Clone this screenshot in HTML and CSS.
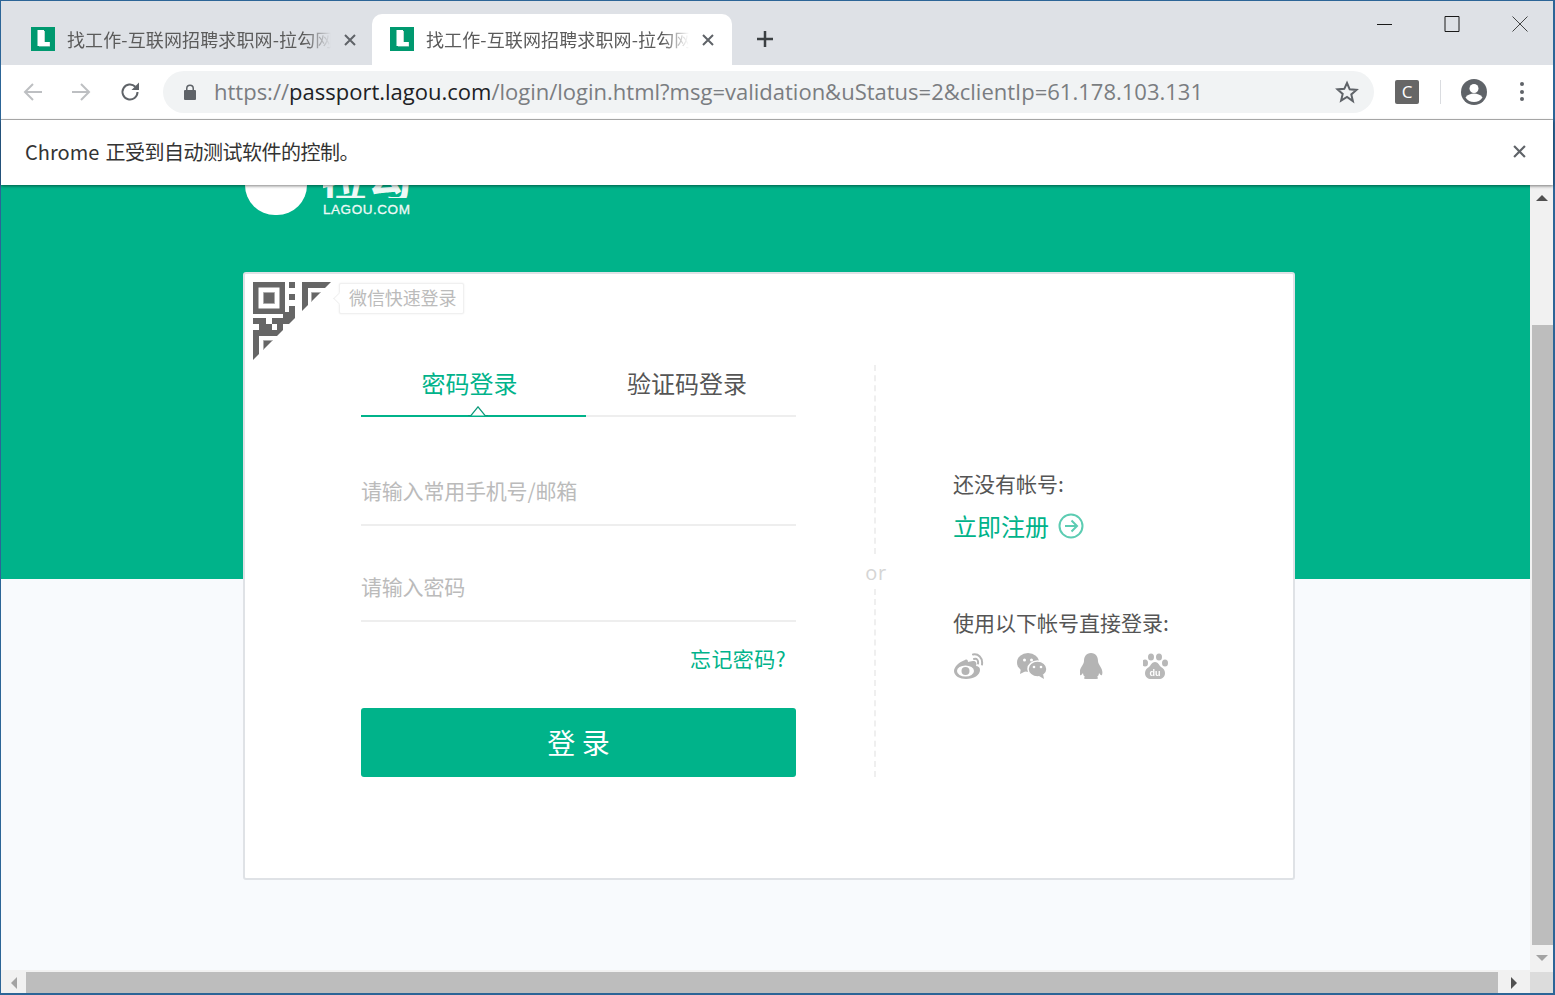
FILE: index.html
```html
<!DOCTYPE html>
<html lang="zh-CN">
<head>
<meta charset="utf-8">
<title>拉勾网</title>
<link rel="stylesheet" href="styles.css">
</head>
<body>
<div class="window">
  <div class="tabstrip">
    <div class="tab">
      <svg class="favicon" viewBox="0 0 24 24"><rect width="24" height="24" fill="#00996f"/><path d="M8 4h6v11h5v4.500H8z" fill="#c5d9d1"/><path d="M6.500 3H13v12h5.500v4h-12z" fill="#fff"/></svg>
      <span class="tab-title">找工作-互联网招聘求职网-拉勾网</span>
      <svg class="tab-x" viewBox="0 0 12 12"><path d="M1 1l10 10M11 1L1 11"/></svg>
    </div>
    <div class="tab active">
      <svg class="favicon" viewBox="0 0 24 24"><rect width="24" height="24" fill="#00996f"/><path d="M8 4h6v11h5v4.500H8z" fill="#c5d9d1"/><path d="M6.500 3H13v12h5.500v4h-12z" fill="#fff"/></svg>
      <span class="tab-title">找工作-互联网招聘求职网-拉勾网</span>
      <svg class="tab-x" viewBox="0 0 12 12"><path d="M1 1l10 10M11 1L1 11"/></svg>
    </div>
    <svg class="newtab" viewBox="0 0 18 18"><path d="M9 1v16M1 9h16"/></svg>
    <div class="winctl">
      <svg viewBox="0 0 16 16"><path d="M0 8.500h15"/></svg>
      <svg viewBox="0 0 16 16"><path d="M1 .5h14v15H1z"/></svg>
      <svg viewBox="0 0 16 16"><path d="M.5.5l15 15M15.500.5l-15 15"/></svg>
    </div>
  </div>
  <div class="toolbar">
    <svg class="nav dim" viewBox="0 0 24 24"><path d="M21 12H4M12 4l-8 8 8 8"/></svg>
    <svg class="nav dim fwd" viewBox="0 0 24 24"><path d="M3 12h17M12 4l8 8-8 8"/></svg>
    <svg class="nav reload" viewBox="0 0 24 24"><path d="M19.500 12a7.500 7.500 0 1 1-2.200-5.300"/><path class="fill" d="M13.500 10H21V2.500z"/></svg>
    <div class="omnibox">
      <svg class="lock" viewBox="0 0 12 16"><path d="M2 6V4.500a4 4 0 0 1 8 0V6h1a1 1 0 0 1 1 1v8a1 1 0 0 1-1 1H1a1 1 0 0 1-1-1V7a1 1 0 0 1 1-1zm1.500 0h5V4.500a2.500 2.500 0 0 0-5 0z"/></svg>
      <span class="url"><span class="dim-url">https://</span>passport.lagou.com<span class="dim-url">/login/login.html?msg=validation&amp;uStatus=2&amp;clientIp=61.178.103.131</span></span>
      <svg class="star" viewBox="0 0 24 24"><path d="M12 3l2.700 6.300 6.800.6-5.200 4.500 1.600 6.700L12 17l-5.900 3.600 1.600-6.700-5.200-4.500 6.800-.6z"/></svg>
    </div>
    <div class="ext">C</div>
    <div class="sep"></div>
    <svg class="avatar" viewBox="0 0 26 26"><circle cx="13" cy="13" r="13" fill="#5f6368"/><circle cx="13" cy="9.500" r="4.500" fill="#fff"/><path d="M4.500 18.500c2-3 5.500-4 8.500-4s6.500 1 8.500 4c-2 3-5 4.500-8.500 4.500s-6.500-1.500-8.500-4.500z" fill="#fff"/></svg>
    <div class="dots"><i></i><i></i><i></i></div>
  </div>
  <div class="infobar">
    <span class="info-text"><span class="brand">Chrome</span> 正受到自动测试软件的控制。</span>
    <svg class="info-x" viewBox="0 0 12 12"><path d="M1 1l10 10M11 1L1 11"/></svg>
  </div>
  <div class="viewport">
    <div class="viewrow">
      <main class="page">
        <header class="page-head">
          <div class="logo-disc"></div>
          <div class="logo-words">
            <div class="logo-cn"><span>拉勾</span></div>
            <div class="logo-en">LAGOU.COM</div>
          </div>
        </header>
        <section class="card">
          <div class="qr-wrap">
            <svg class="qr" viewBox="0 0 78 78">
              <defs><clipPath id="qrcut"><path d="M0 0h78L0 78z"/></clipPath></defs>
              <g clip-path="url(#qrcut)">
                <path fill="#666" fill-rule="evenodd" d="M0 0h32v32H0zM5.500 5.500v21h21v-21z"/>
                <path fill="#666" stroke="#ababab" d="M10.500 10.500h11v11h-11z"/>
                <path fill="#666" d="M36 0h6v6h-6zM36 12h6v6h-6zM36 24h6v18h-6zM30 30h6v6h-6z"/>
                <path fill="#666" d="M49 0h29v6H55v30h-6z"/>
                <path fill="#666" stroke="#ababab" d="M58.500 10.500h11v11h-11z"/>
                <path fill="#666" d="M0 36h13v6H0zM19 36h17v6H19zM6 42h13v6H6zM24 42h6v6h-6z"/>
                <path fill="#666" d="M0 48h40v6H6v24H0z"/>
                <path fill="#666" stroke="#ababab" d="M10.500 58.500h11v11h-11z"/>
              </g>
            </svg>
            <div class="qr-tip">微信快速登录</div>
          </div>
          <div class="card-body">
            <form class="login">
              <div class="tabs">
                <div class="form-tab on">密码登录</div>
                <div class="form-tab">验证码登录</div>
                <svg class="caret" viewBox="0 0 20 10"><path d="M0 9.500h3L10 .8l7 8.700h3"/></svg>
              </div>
              <div class="field first">请输入常用手机号/邮箱</div>
              <div class="field">请输入密码</div>
              <div class="forgot">忘记密码?</div>
              <div class="submit">登 录</div>
            </form>
            <div class="divider">
              <div class="dash"></div>
              <div class="or">or</div>
              <div class="dash"></div>
            </div>
            <aside class="side">
              <div class="side-label">还没有帐号:</div>
              <div class="reg"><span>立即注册</span>
                <svg class="reg-arrow" viewBox="0 0 26 26"><circle cx="13" cy="13" r="11.500"/><path d="M7 13h12M13.500 7.500L19 13l-5.500 5.500"/></svg>
              </div>
              <div class="side-label third">使用以下帐号直接登录:</div>
              <div class="socials">
                <svg viewBox="0 0 30 26"><path d="M11 7C5 9 0 14 0 18c0 5 6 8 12 8 8 0 14-4 14-9 0-3-2-4-4-4 1-3 0-5-3-5-2 0-4 1-5 1 0-2-1-3-3-2z" fill="#b4b4b4"/><ellipse cx="11.500" cy="18" rx="8.500" ry="5.500" fill="#fff"/><circle cx="11.500" cy="18" r="4" fill="#b4b4b4"/><path d="M19 1.500c5-1 10 3 9 10M20 6c3-1 4.500 1.500 4 4.500" fill="none" stroke="#b4b4b4" stroke-width="2" stroke-linecap="round"/></svg>
                <svg viewBox="0 0 30 26"><ellipse cx="11" cy="9.500" rx="11" ry="9.500" fill="#b4b4b4"/><path d="M4 15l-1 6 6-3z" fill="#b4b4b4"/><ellipse cx="20.500" cy="16" rx="9.500" ry="8" fill="#b4b4b4" stroke="#fff" stroke-width="1.500"/><path d="M26 21l1 5-5-3z" fill="#b4b4b4"/><circle cx="7.500" cy="7" r="1.500" fill="#fff"/><circle cx="14.500" cy="7" r="1.500" fill="#fff"/><circle cx="17" cy="14" r="1.300" fill="#fff"/><circle cx="24" cy="14" r="1.300" fill="#fff"/></svg>
                <svg viewBox="0 0 30 26"><path transform="translate(-4 0)" d="M15 0c5 0 7 4 7 8 0 2 1 3 2 5 2 3 3 6 2 9-1 1-2-1-3-2 0 2-1 3-2 4 2 1 1 2-2 2h-8c-3 0-4-1-2-2-1-1-2-2-2-4-1 1-2 3-3 2-1-3 0-6 2-9 1-2 2-3 2-5 0-4 2-8 7-8z" fill="#b4b4b4"/></svg>
                <svg viewBox="0 0 30 26"><g transform="translate(-3 0)"><g fill="#b8b8b8"><ellipse cx="5" cy="10" rx="3" ry="3.500"/><ellipse cx="11" cy="4" rx="3" ry="3.500"/><ellipse cx="19" cy="4" rx="3" ry="3.500"/><ellipse cx="25" cy="10" rx="3" ry="3.500"/><path d="M15 9c3 0 4 3 6 5 2 1 4 3 4 6 0 4-3 6-6 6h-8c-3 0-6-2-6-6 0-3 2-5 4-6 2-2 3-5 6-5z"/></g><text x="15" y="23" class="du">du</text></g></svg>
              </div>
            </aside>
          </div>
        </section>
      </main>
      <div class="vscroll">
        <div class="sb-btn"><svg viewBox="0 0 12 6"><path d="M0 6L6 0l6 6z" fill="#505050"/></svg></div>
        <div class="vtrack"><div class="vthumb"></div></div>
        <div class="sb-btn"><svg viewBox="0 0 12 6"><path d="M0 0h12L6 6z" fill="#a3a3a3"/></svg></div>
      </div>
    </div>
    <div class="hscroll">
      <div class="hbtn"><svg viewBox="0 0 6 12"><path d="M6 0v12L0 6z" fill="#a3a3a3"/></svg></div>
      <div class="hthumb"></div>
      <div class="hbtn right"><svg viewBox="0 0 6 12"><path d="M0 0v12l6-6z" fill="#505050"/></svg></div>
      <div class="corner"></div>
    </div>
  </div>
</div>
</body>
</html>
```

FILE: styles.css
```css
* { box-sizing: border-box; }
html, body { margin: 0; height: 100%; overflow: hidden; }
body { font-family: "Noto Sans CJK SC", "Noto Sans", sans-serif; }
.window { width: 1555px; height: 995px; border: 1px solid #2c6597; border-width: 1px 2px 2px 1px; display: flex; flex-direction: column; background: #fff; }

.tabstrip { height: 64px; flex: none; background: #dee1e6; display: flex; align-items: flex-end; padding-left: 13px; position: relative; }
.tab { width: 360px; height: 51px; padding: 0 16px 0 17px; display: flex; align-items: center; color: #5b5b5b; font-size: 18px; letter-spacing: .12px; margin-right: -1px; }
.tab.active { background: #fff; border-radius: 10px 10px 0 0; margin-left: -1px; padding-left: 18px; }
.favicon { width: 24px; height: 24px; flex: none; margin-right: 12px; margin-top: -1px; }
.tab-title { flex: 1; min-width: 0; white-space: nowrap; overflow: hidden; padding-bottom: 1px; -webkit-mask-image: linear-gradient(90deg, #000 90%, transparent); mask-image: linear-gradient(90deg, #000 90%, transparent); }
.tab-x { width: 12px; height: 12px; flex: none; margin-left: 13px; margin-right: 2px; fill: none; stroke: #5f6368; stroke-width: 2; }
.newtab { width: 18px; height: 18px; margin: 0 0 17px 25px; fill: none; stroke: #3c4043; stroke-width: 2.500; }
.winctl { position: absolute; right: 0; top: 0; display: flex; }
.winctl svg { width: 16px; height: 16px; margin: 15px 26px 0 26px; fill: none; stroke: #1a1a1a; stroke-width: 1; }
.winctl svg:first-child { margin-right: 25px; }
.winctl svg:last-child { margin: 15px 25px 0 26px; stroke-width: .8; }

.toolbar { height: 55px; flex: none; border-bottom: 1px solid #b5b5b5; display: flex; align-items: center; padding: 0 0 1px 20px; }
.nav { width: 24px; height: 24px; flex: none; fill: none; stroke-width: 2; margin-right: 24px; }
.nav.dim { stroke: #bdbfc2; }
.nav.fwd { margin-right: 25px; }
.nav.reload { stroke: #5f6368; margin-right: 21px; }
.nav .fill { fill: #5f6368; stroke: none; }
.omnibox { width: 1211px; height: 42px; background: #f1f3f4; border-radius: 21px; display: flex; align-items: center; padding: 0 15px 0 21px; flex: none; }
.lock { width: 12px; height: 16px; fill: #5f6368; flex: none; margin-right: 18px; }
.url { flex: 1; font-family: "Open Sans", "Noto Sans", sans-serif; font-size: 22px; letter-spacing: 0; line-height: 30px; padding-bottom: 2px; color: #202124; white-space: nowrap; }
.dim-url { color: #7a7d81; }
.star { width: 24px; height: 24px; fill: none; stroke: #5f6368; stroke-width: 2; flex: none; }
.ext { width: 24px; height: 24px; margin-left: 21px; background: #666; border-radius: 2px; color: #fff; font: 17px/24px "Open Sans", sans-serif; text-align: center; flex: none; }
.sep { width: 1px; height: 24px; background: #dadce0; margin: 0 20px 0 21px; flex: none; }
.avatar { width: 26px; height: 26px; flex: none; }
.dots { display: flex; flex-direction: column; gap: 3.500px; margin-left: 33px; }
.dots i { width: 4px; height: 4px; border-radius: 50%; background: #5f6368; display: block; }

.infobar { height: 65px; flex: none; background: #fff; display: flex; align-items: center; justify-content: space-between; padding: 0 27px 0 24px; font-size: 20px; letter-spacing: -.5px; word-spacing: 2px; color: #333; box-shadow: 0 1px 3px rgba(0,0,0,.5); position: relative; z-index: 2; }
.info-text { padding-bottom: 3px; }
.brand { letter-spacing: .05px; }
.info-x { width: 13px; height: 13px; fill: none; stroke: #5f6368; stroke-width: 2; margin-bottom: 2px; }

.viewport { flex: 1; min-height: 0; display: flex; flex-direction: column; }
.viewrow { flex: 1; min-height: 0; display: flex; }
.page { flex: 1; min-width: 0; overflow: hidden; background: linear-gradient(#00b38a 394px, #f8fafd 394px); }
.page-head { height: 87px; padding-left: 244px; display: flex; align-items: flex-start; }
.logo-disc { width: 62px; height: 30px; background: #fff; border-radius: 0 0 31px 31px; flex: none; }
.logo-words { margin-left: 16px; color: #eef9f6; }
.logo-cn { height: 13px; overflow: hidden; position: relative; }
.logo-cn span { display: block; margin: -30px 0 0 -3px; font-size: 46px; line-height: 46px; font-weight: 700; white-space: nowrap; }
.logo-en { margin-top: 4px; font: 400 13.500px/15px "Liberation Sans", sans-serif; letter-spacing: .55px; -webkit-text-stroke: .3px #eef9f6; }

.card { width: 1052px; height: 608px; margin-left: 242px; background: #fff; border: 2px solid #dfe2e6; border-radius: 3px; position: relative; }
.qr-wrap { position: absolute; left: 8px; top: 8px; display: flex; align-items: flex-start; }
.qr { width: 78px; height: 78px; display: block; }
.qr-tip { margin: 1px 0 0 8px; padding: 0 6px 0 9px; height: 31px; width: 125px; border: 1px solid #f0f0f0; box-shadow: 0 0 2px rgba(0,0,0,.08); background: #fff; border-radius: 2px; font-size: 18px; line-height: 27px; letter-spacing: -.1px; color: #bbb; white-space: nowrap; position: relative; }
.qr-tip::before { content: ""; position: absolute; left: -5px; top: 10px; width: 8px; height: 8px; background: #fff; border-left: 1px solid #f0f0f0; border-bottom: 1px solid #f0f0f0; transform: rotate(45deg); }
.card-body { display: flex; padding: 91px 0 0 116px; }
.login { width: 435px; flex: none; }
.tabs { display: flex; height: 52px; border-bottom: 2px solid #eee; position: relative; }
.form-tab { font-size: 24px; line-height: 36px; color: #555; padding: 0; white-space: nowrap; margin-left: 41px; width: 120px; text-align: center; }
.form-tab.on { color: #00b38a; width: 225px; margin: 0 0 -2px 0; border-bottom: 2px solid #00b38a; padding-right: 8px; }
.caret { position: absolute; left: 107px; top: 41px; width: 20px; height: 10px; fill: #fff; stroke: #0b9a7a; stroke-width: 1.200; }
.field { height: 58px; margin-top: 38px; border-bottom: 2px solid #eee; font-size: 21px; line-height: 30px; letter-spacing: -.2px; color: #bbb; padding-top: 7px; }
.field.first { margin-top: 51px; }
.forgot { margin-top: 21px; font-size: 21px; line-height: 30px; text-align: right; color: #00b38a; padding-right: 10px; letter-spacing: .4px; }
.submit { margin-top: 35px; height: 69px; background: #00b38a; border-radius: 3px; color: #fff; font-size: 28px; line-height: 69px; text-align: center; }
.divider { width: 24px; margin: 0 0 0 67px; height: 412px; display: flex; flex-direction: column; align-items: center; flex: none; }
.dash { flex: 1; width: 0; border-left: 2px dashed #efefef; }
.or { font: 20px/38px "Open Sans", sans-serif; letter-spacing: .6px; color: #d5d5d5; height: 35px; padding-left: 2px; }
.side { margin-left: 66px; padding-top: 103px; color: #555; }
.side-label { font-size: 21px; line-height: 30px; white-space: nowrap; }
.reg { display: flex; align-items: center; gap: 9px; margin-top: 10px; font-size: 24px; line-height: 36px; color: #00b38a; }
.reg-arrow { width: 26px; height: 26px; fill: none; stroke: #5cccb2; stroke-width: 2; }
.third { margin-top: 63px; }
.socials { display: flex; gap: 33px; margin: 16px 0 0 1px; }
.socials svg { width: 30px; height: 26px; display: block; filter: blur(.35px); }
.du { font: 700 9px "Liberation Sans", sans-serif; fill: #fff; text-anchor: middle; }

.vscroll { width: 23px; flex: none; background: #f1f1f1; display: flex; flex-direction: column; }
.sb-btn { height: 25px; flex: none; display: flex; align-items: center; justify-content: center; padding-left: 1px; }
.sb-btn svg { width: 12px; height: 6px; }
.vtrack { flex: 1; padding: 115px 0 0 2px; min-height: 0; display: flex; flex-direction: column; }
.vthumb { flex: 1; background: #bdbdbd; }
.hscroll { height: 23px; flex: none; background: #f1f1f1; display: flex; }
.hbtn { width: 25px; flex: none; display: flex; align-items: center; justify-content: center; padding-top: 2px; }
.hbtn svg { width: 6px; height: 12px; }
.hthumb { flex: none; width: 1472px; background: #bdbdbd; margin-top: 2px; }
.hbtn.right { width: 32px; }
.corner { flex: none; width: 23px; background: #dcdcdc; margin-top: 2px; }
```
